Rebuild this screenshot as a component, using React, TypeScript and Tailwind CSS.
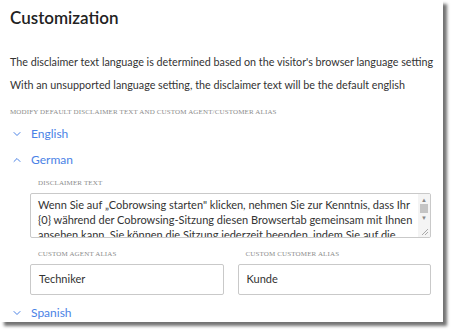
import { ChevronDown, ChevronUp } from "lucide-react";

const disclaimer =
  "Wenn Sie auf „Cobrowsing starten\" klicken, nehmen Sie zur Kenntnis, dass Ihr {0} während der Cobrowsing-Sitzung diesen Browsertab gemeinsam mit Ihnen ansehen kann. Sie können die Sitzung jederzeit beenden, indem Sie auf die rote Schaltfläche klicken.";

const Label = ({ children }: { children: string }) => (
  <div className="font-['Liberation_Serif',serif] text-[7px] leading-[9px] uppercase tracking-[0.02em] text-[#8c8c8c]">
    {children}
  </div>
);

const LangRow = ({ name, open }: { name: string; open?: boolean }) => (
  <div className="flex items-center h-[26px] text-[#4a82e6]">
    <span className="w-[21px] flex justify-start pl-[1px]">
      {open ? (
        <ChevronUp className="w-[12px] h-[12px]" strokeWidth={2} />
      ) : (
        <ChevronDown className="w-[12px] h-[12px]" strokeWidth={2} />
      )}
    </span>
    <span className="text-[12px]">{name}</span>
  </div>
);

export default function App() {
  return (
    <div className="w-[454px] h-[334px] bg-white font-['Lato',sans-serif] text-[#333]">
      <div className="w-[443px] h-[322px] overflow-hidden bg-white shadow-[4px_4px_3px_rgba(0,0,0,0.55)] pl-[10px] pr-[8px] pt-[5px]">
        <h1 className="text-[17px] font-semibold text-[#222] leading-[26px]">Customization</h1>

        <p className="mt-[23px] text-[10.75px] leading-[16px] whitespace-nowrap">
          The disclaimer text language is determined based on the visitor's browser language setting
        </p>
        <p className="mt-[7px] text-[10.75px] leading-[16px] whitespace-nowrap">
          With an unsupported language setting, the disclaimer text will be the default english
        </p>

        <div className="mt-[15px]">
          <Label>Modify default disclaimer text and custom agent/customer alias</Label>
        </div>

        <div className="mt-[4px]">
          <LangRow name="English" />
          <LangRow name="German" open />

          <div className="pl-[20px] pr-[4px]">
            <div className="pl-[8px] mt-[6px]">
              <Label>Disclaimer text</Label>
            </div>
            <div className="mt-[5px] flex h-[45px] rounded-[2px] border border-[#c9c9c9] overflow-hidden">
              <textarea
                readOnly
                value={disclaimer}
                className="flex-1 resize-none overflow-hidden pl-[7px] pr-[4px] pt-[3px] text-[11px] leading-[15px] text-[#333] outline-none"
              />
              <div className="w-[12px] flex flex-col items-center bg-[#f4f4f4] text-[#888]">
                <span className="text-[6px] leading-[9px] mt-[1px]">▲</span>
                <div className="w-[8px] h-[9px] bg-[#c4c4c4]" />
                <span className="text-[6px] leading-[9px]">▼</span>
                <div className="flex-1" />
                <svg width="8" height="8" viewBox="0 0 8 8" className="mb-[1px] ml-[2px]">
                  <path d="M7 1 L1 7 M7 4 L4 7" stroke="#aaa" strokeWidth="1" />
                </svg>
              </div>
            </div>

            <div className="mt-[12px] grid grid-cols-2 gap-[14px]">
              <div>
                <div className="pl-[8px]">
                  <Label>Custom agent alias</Label>
                </div>
                <div className="mt-[5px] h-[31px] flex items-center px-[8px] rounded-[2px] border border-[#c9c9c9] text-[11px]">
                  Techniker
                </div>
              </div>
              <div>
                <div className="pl-[8px]">
                  <Label>Custom customer alias</Label>
                </div>
                <div className="mt-[5px] h-[31px] flex items-center px-[8px] rounded-[2px] border border-[#c9c9c9] text-[11px]">
                  Kunde
                </div>
              </div>
            </div>
          </div>

          <div className="mt-[5px]">
            <LangRow name="Spanish" />
          </div>
        </div>
      </div>
    </div>
  );
}
